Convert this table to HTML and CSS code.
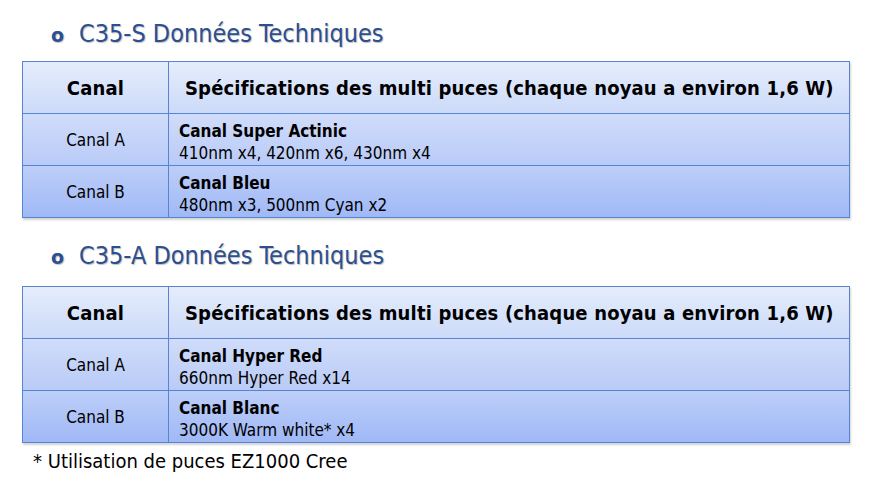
FILE: index.html
```html
<!DOCTYPE html>
<html lang="fr">
<head>
<meta charset="utf-8">
<title>C35 Données Techniques</title>
<link rel="stylesheet" href="styles.css">
</head>
<body>
<main class="page">
  <section class="block block-first">
    <h2 class="title"><span class="bullet">o</span>C35-S Données Techniques</h2>
    <table class="spec">
      <thead>
        <tr class="row-head">
          <th class="col-canal">Canal</th>
          <th class="col-spec">Spécifications des multi puces (chaque noyau a environ 1,6 W)</th>
        </tr>
      </thead>
      <tbody>
        <tr class="row-a">
          <td class="col-canal">Canal A</td>
          <td class="col-spec"><b>Canal Super Actinic</b><br>410nm x4, 420nm x6, 430nm x4</td>
        </tr>
        <tr class="row-b">
          <td class="col-canal">Canal B</td>
          <td class="col-spec"><b>Canal Bleu</b><br>480nm x3, 500nm Cyan x2</td>
        </tr>
      </tbody>
    </table>
  </section>
  <section class="block block-second">
    <h2 class="title"><span class="bullet">o</span>C35-A Données Techniques</h2>
    <table class="spec">
      <thead>
        <tr class="row-head">
          <th class="col-canal">Canal</th>
          <th class="col-spec">Spécifications des multi puces (chaque noyau a environ 1,6 W)</th>
        </tr>
      </thead>
      <tbody>
        <tr class="row-a">
          <td class="col-canal">Canal A</td>
          <td class="col-spec"><b>Canal Hyper Red</b><br>660nm Hyper Red x14</td>
        </tr>
        <tr class="row-b">
          <td class="col-canal">Canal B</td>
          <td class="col-spec"><b>Canal Blanc</b><br>3000K Warm white* x4</td>
        </tr>
      </tbody>
    </table>
  </section>
  <p class="note">* Utilisation de puces EZ1000 Cree</p>
</main>
</body>
</html>
```
FILE: styles.css
```css
html, body {
  margin: 0;
  padding: 0;
  background: #ffffff;
}
body {
  font-family: "DejaVu Sans Condensed", "DejaVu Sans", sans-serif;
  color: #000;
  width: 876px;
  height: 477px;
  overflow: hidden;
}
.page {
  padding: 0 0 0 22px;
}
.title {
  margin: 0;
  font-weight: normal;
  font-size: 25px;
  line-height: 30px;
  color: #2c4f92;
  text-shadow: 1px 1px 1px rgba(0, 0, 0, 0.25);
  display: flex;
  align-items: baseline;
  padding-left: 29px;
}
.block-first .title {
  padding-top: 19px;
  margin-bottom: 11px;
}
.block-second .title {
  padding-top: 23px;
  margin-bottom: 14px;
}
.bullet {
  font-family: "DejaVu Sans", sans-serif;
  font-weight: bold;
  font-size: 19px;
  width: 28px;
}
.spec {
  border-collapse: collapse;
  width: 828px;
  box-shadow: 1px 2px 2px rgba(0, 0, 0, 0.18);
}
.spec th, .spec td {
  border: 1px solid #5585d4;
  padding: 0;
  box-sizing: border-box;
}
.col-canal {
  width: 146px;
  text-align: center;
}
.spec th {
  font-size: 20px;
  letter-spacing: 0.16px;
  font-weight: bold;
  height: 52px;
}
.spec th.col-spec {
  text-align: left;
  padding-left: 16px;
}
.spec td {
  font-size: 17px;
  line-height: 22px;
  height: 52px;
}
.spec td.col-spec {
  padding-left: 10px;
  padding-top: 4px;
}
.spec td.col-spec b {
  font-weight: bold;
}
.row-head {
  background: linear-gradient(#e5edfc, #ccdaf9);
}
.row-a {
  background: linear-gradient(#d0dcfa, #b8caf7);
}
.row-b {
  background: linear-gradient(#bdcef8, #9fb8f6);
}
.note {
  margin: 6px 0 0 11px;
  font-size: 20px;
  line-height: 24px;
}
```
